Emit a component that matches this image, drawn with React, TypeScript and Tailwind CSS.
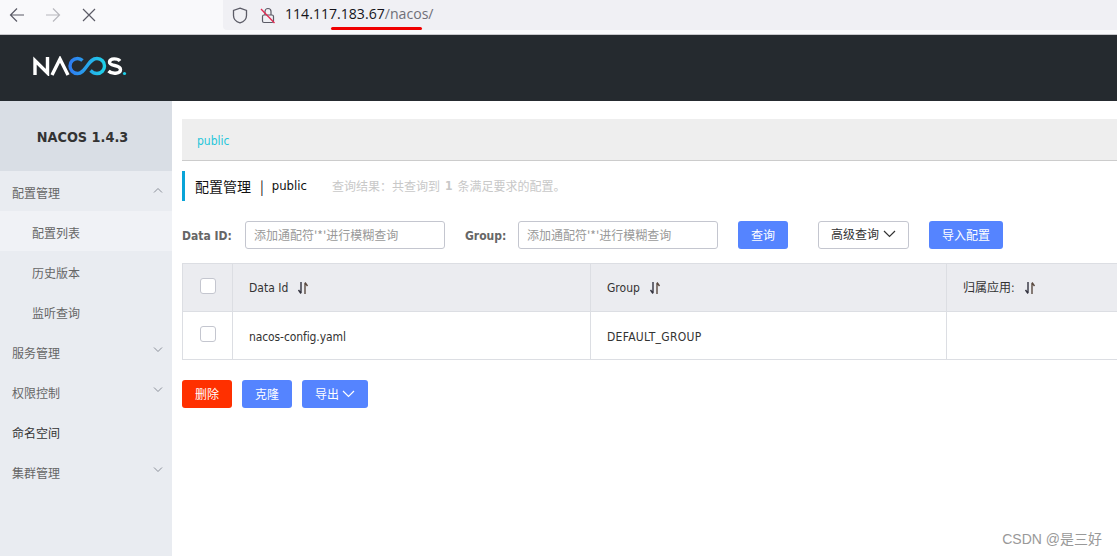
import React from "react";

const cjk = "font-['Noto_Sans_CJK_SC',sans-serif]";
const latin = "font-['DejaVu_Sans_Condensed','DejaVu_Sans','Noto_Sans_CJK_SC',sans-serif]";

function Sort() {
  return (
    <svg width="12" height="14" viewBox="0 0 12 14" className="ml-[9px] shrink-0" fill="none" stroke="#33333f" strokeWidth="1.4">
      <path d="M4 1v11M4 12.500L1.500 9" />
      <path d="M8 13V2M8 1.500L10.500 5" stroke="#5a4a40" />
    </svg>
  );
}

function Chevron({ up, className = "" }: { up?: boolean; className?: string }) {
  return (
    <svg width="10" height="6" viewBox="0 0 10 6" fill="none" stroke="#8a8f99" strokeWidth="1" className={className}>
      <path d={up ? "M1 5.500L5 1.500l4 4" : "M1 .5l4 4 4-4"} />
    </svg>
  );
}

function Caret({ color }: { color: string }) {
  return (
    <svg width="13" height="8" viewBox="0 0 13 8" fill="none" stroke={color} strokeWidth="1.2">
      <path d="M1 1l5.500 5.500L12 1" />
    </svg>
  );
}

function Logo() {
  return (
    <svg width="96" height="20" viewBox="0 0 96 20" fill="none">
      <defs>
        <linearGradient id="g" x1="0" x2="1" y1="0" y2="0">
          <stop offset="0" stopColor="#2f7bf0" />
          <stop offset="1" stopColor="#1fd0e8" />
        </linearGradient>
      </defs>
      <path d="M3 19V4.500L15.500 17V1" stroke="#fff" strokeWidth="3.400" />
      <path d="M20 19L28 3l8 16" stroke="#fff" strokeWidth="3.400" />
      <path d="M50.500 4.500C49 3 47.500 2.500 45.500 2.500 41 2.500 38 6 38 10c0 4 3 7.500 7.500 7.500 4.500 0 6.500-3.500 9.500-7.500 3-4 5-7.500 10-7.500 4.500 0 7.500 3.500 7.500 7.500 0 4-3 7.500-7.500 7.500-3 0-5-1.500-6.500-3" stroke="url(#g)" strokeWidth="3.400" />
      <path d="M88 5C86 2.500 78 1.500 77.500 6 77 11 88.500 8 88.500 13.500 88.500 18 80 18.500 76.500 15" stroke="#fff" strokeWidth="3.400" />
      <circle cx="92.500" cy="17.500" r="1.600" fill="#1fd0e8" />
    </svg>
  );
}

function Browser() {
  return (
    <div className="h-[35px] bg-[#f9f9fb] border-b border-[#c8c8cc] flex items-start shrink-0">
      <div className="w-[223px] h-[30px] flex items-center pl-[9px] gap-[20px] shrink-0">
        <svg width="16" height="16" viewBox="0 0 16 16" fill="none" stroke="#5b5b66" strokeWidth="1.200"><path d="M15 8H1.500M8 1.500L1.500 8 8 14.500" /></svg>
        <svg width="16" height="16" viewBox="0 0 16 16" fill="none" stroke="#b8b8bd" strokeWidth="1.200"><path d="M1 8h13.500M8 1.500L14.500 8 8 14.500" /></svg>
        <svg width="14" height="14" viewBox="0 0 14 14" fill="none" stroke="#5b5b66" strokeWidth="1.200" className="ml-[1px]"><path d="M1 1l12 12M13 1L1 13" /></svg>
      </div>
      <div className="flex-1 h-[30px] bg-[#f0f0f4] rounded-bl-[4px] flex items-center pl-[9px] relative">
        <svg width="16" height="17" viewBox="0 0 16 17" fill="none" stroke="#5b5b66" strokeWidth="1.300"><path d="M8 1.200l6.500 2.200v5c0 3.600-2.700 6.300-6.500 7.500-3.800-1.200-6.500-3.900-6.500-7.500v-5z" /></svg>
        <svg width="16" height="17" viewBox="0 0 16 17" fill="none" className="ml-[12px]">
          <rect x="2.500" y="8" width="11" height="7.500" rx="1.500" stroke="#5b5b66" strokeWidth="1.200" />
          <path d="M5 8V4.500a3 3 0 0 1 6 0V8" stroke="#5b5b66" strokeWidth="1.200" />
          <path d="M1 2l13.500 14" stroke="#e22850" strokeWidth="1.300" />
        </svg>
        <span className="ml-[9px] pb-[2px] text-[14.100px] font-['Open_Sans',sans-serif] text-[#15141a] whitespace-nowrap">114.117.183.67<span className="text-[#6f6f78]">/nacos/</span></span>
        <div className="absolute left-[108px] top-[27px] w-[91px] h-[3px] bg-[#f00000] rounded-full" />
      </div>
    </div>
  );
}

function MenuItem({ label, sub, open, plain, dark }: { label: string; sub?: boolean; open?: boolean; plain?: boolean; dark?: boolean }) {
  return (
    <div className={`h-[40px] pt-[4px] flex items-center justify-between shrink-0 ${sub ? "pl-[32px]" : "pl-[12px]"} pr-[9px] ${dark ? "text-[#333]" : "text-[#666]"}`}>
      <span>{label}</span>
      {!sub && !plain && <Chevron up={open} className="mb-[6px]" />}
    </div>
  );
}

function Sidebar() {
  return (
    <aside className="w-[172px] shrink-0 bg-[#e9ecf1] flex flex-col text-[12px]">
      <div className={`h-[70px] bg-[#d9dee5] flex items-center justify-center pr-[7px] pt-[4px] text-[14.300px] font-bold text-[#333] ${latin}`}>NACOS 1.4.3</div>
      <div className="bg-[#e9ecf1]"><MenuItem label="配置管理" open /></div>
      <div className="bg-[#f0f2f6]"><MenuItem label="配置列表" sub /></div>
      <MenuItem label="历史版本" sub />
      <MenuItem label="监听查询" sub />
      <MenuItem label="服务管理" />
      <MenuItem label="权限控制" />
      <MenuItem label="命名空间" plain dark />
      <MenuItem label="集群管理" />
    </aside>
  );
}

function Btn({ children, className = "" }: { children: React.ReactNode; className?: string }) {
  return <div className={`h-[28px] rounded-[3px] flex items-center justify-center text-[12px] text-white bg-[#5584ff] ${className}`}>{children}</div>;
}

function Input({ className = "" }: { className?: string }) {
  return (
    <div className={`w-[200px] h-[28px] rounded-[3px] border border-[#c4c6cf] flex items-center pl-[8px] text-[12px] text-[#999] ${className}`}>添加通配符'*'进行模糊查询</div>
  );
}

function Check() {
  return <div className="w-[16px] h-[16px] rounded-[3px] border border-[#c4c6cf] bg-white" />;
}

function Cell({ children, className = "" }: { children?: React.ReactNode; className?: string }) {
  return <div className={`flex items-center pl-[16px] text-[12px] text-[#333] border-l border-[#dcdee3] ${className}`}>{children}</div>;
}

function Table() {
  return (
    <div className={`mt-[14px] border-t border-b border-l border-[#dcdee3] grid grid-cols-[49px_358px_356px_1fr] grid-rows-[48px_47px] ${latin}`}>
      <div className="bg-[#ebecf0] flex items-center justify-center border-b border-[#dcdee3] pb-[4px]"><Check /></div>
      <Cell className="bg-[#ebecf0] border-b">Data Id<Sort /></Cell>
      <Cell className="bg-[#ebecf0] border-b">Group<Sort /></Cell>
      <Cell className="bg-[#ebecf0] border-b">归属应用:<Sort /></Cell>
      <div className="flex items-center justify-center pb-[3px]"><Check /></div>
      <Cell className="pt-[3px] tracking-[-0.1px]">nacos-config.yaml</Cell>
      <Cell className="pt-[3px] tracking-[0.3px]">DEFAULT_GROUP</Cell>
      <Cell />
    </div>
  );
}

export default function App() {
  return (
    <div className={`relative w-[1117px] h-[556px] overflow-hidden bg-white flex flex-col ${cjk}`}>
      <Browser />
      <header className="h-[66px] bg-[#252a2f] flex items-center pl-[32px] pb-[4px] shrink-0"><Logo /></header>
      <div className="flex flex-1 min-h-0">
        <Sidebar />
        <main className="flex-1 min-w-0 pl-[10px] pt-[18px]">
          <div className={`h-[42px] bg-[#eeeeee] border-b border-[#cccccc] flex items-center pl-[15px] pt-[2px] text-[12px] text-[#26c6da] ${latin}`}>public</div>
          <div className="mt-[10px] h-[30px] border-l-[3px] border-[#09a4d8] flex items-center pl-[10px] whitespace-nowrap">
            <span className="text-[14px] text-[#111]">配置管理</span>
            <span className="ml-[9px] text-[14px] text-[#111]">|</span>
            <span className={`ml-[8px] text-[13px] text-[#111] ${latin}`}>public</span>
            <span className="ml-[25px] text-[12px] text-[#c8c8c8] flex items-center">{"查询结果\uFF1A共查询到"} <b className={`mx-[5px] ${latin}`}>1</b> 条满足要求的配置。</span>
          </div>
          <div className="mt-[20px] flex items-center whitespace-nowrap">
            <span className={`w-[63px] pt-[1px] text-[12px] font-bold text-[#666] ${latin}`}>Data ID:</span>
            <Input />
            <span className={`ml-[20px] w-[53px] pt-[1px] text-[12px] font-bold text-[#666] ${latin}`}>Group:</span>
            <Input />
            <Btn className="ml-[20px] w-[50px]">查询</Btn>
            <Btn className="ml-[30px] w-[91px] !bg-white border border-[#c4c6cf] !text-[#333] gap-[4px] pb-[3px]">高级查询<Caret color="#333" /></Btn>
            <Btn className="ml-[20px] w-[74px]">导入配置</Btn>
          </div>
          <Table />
          <div className="mt-[20px] flex gap-[10px]">
            <Btn className="w-[50px] !bg-[#ff3000]">删除</Btn>
            <Btn className="w-[50px]">克隆</Btn>
            <Btn className="w-[66px] gap-[3px]">导出<Caret color="#fff" /></Btn>
          </div>
        </main>
      </div>
      <div className="absolute right-[15px] bottom-[6px] text-[14px] text-[#999] font-['Liberation_Sans','Noto_Sans_CJK_SC',sans-serif]">CSDN @是三好</div>
    </div>
  );
}
